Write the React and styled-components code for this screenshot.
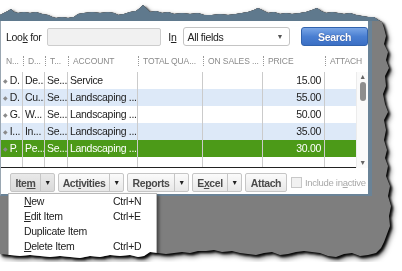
import styled, { createGlobalStyle } from "styled-components";

const FONT = `"Liberation Sans", Arial, sans-serif`;

const GlobalStyle = createGlobalStyle`
  html, body { margin: 0; padding: 0; background: #fff; }
  body { font-family: ${FONT}; letter-spacing: -0.3px; }
`;

// torn paper outline of the screenshot
const TOP = [
  [0, 15], [4, 13], [8, 11], [11, 9], [14, 12], [18, 13], [24, 12], [30, 13], [36, 12], [42, 14],
  [48, 15], [52, 17], [56, 18], [62, 17], [68, 18], [74, 17], [78, 14], [84, 13], [92, 12], [100, 13],
  [108, 12], [114, 13], [118, 15], [124, 14], [130, 12], [136, 11], [140, 8], [143, 5], [146, 8],
  [150, 12], [156, 11], [162, 13], [168, 12], [174, 14], [182, 13], [190, 14], [198, 13], [204, 15],
  [212, 15], [220, 14], [228, 15], [236, 14], [242, 13], [248, 12], [254, 10], [258, 8], [262, 10],
  [268, 13], [274, 12], [280, 14], [286, 13], [292, 14], [300, 13], [306, 12], [312, 10], [317, 8],
  [321, 11], [326, 13], [332, 12], [338, 13], [344, 14], [350, 13], [356, 15], [362, 16], [368, 17],
  [374, 17], [378, 20], [382, 22],
];
const RIGHT = [
  [384, 28], [386, 36], [384, 44], [388, 52], [386, 60], [389, 68], [385, 76], [386, 86], [383, 94],
  [385, 104], [388, 112], [384, 120], [386, 130], [384, 140], [387, 150], [385, 158], [388, 166],
  [386, 176], [390, 186], [388, 196], [391, 206], [389, 216], [390, 226], [387, 234], [384, 242],
  [381, 248],
];
const BOTTOM = [
  [376, 253], [368, 255], [360, 256], [352, 253], [344, 254], [336, 257], [328, 256], [320, 253],
  [312, 252], [304, 251], [296, 252], [288, 254], [280, 255], [272, 252], [264, 253], [256, 255],
  [248, 254], [240, 253], [232, 251], [222, 252], [214, 250], [206, 251], [198, 251], [190, 253],
  [182, 252], [174, 253], [166, 254], [158, 253], [150, 252], [144, 256], [138, 257], [130, 255],
  [120, 256], [110, 255], [100, 257], [90, 256], [80, 258], [70, 257], [60, 256], [50, 257],
  [40, 256], [30, 255], [20, 256], [10, 255], [0, 254],
];
const TORN = [...TOP, ...RIGHT, ...BOTTOM].map(([x, y]) => `${x}px ${y}px`).join(", ");

const HEAD = [
  { title: "N...", w: 22 },
  { title: "D...", w: 22 },
  { title: "T...", w: 23 },
  { title: "ACCOUNT", w: 70 },
  { title: "TOTAL QUA...", w: 65 },
  { title: "ON SALES ...", w: 60 },
  { title: "PRICE", w: 62 },
  { title: "ATTACH", w: 43 },
];
const BODY_COLS = "22px 22px 23px 70px 65px 60px 62px 31px";

const ROWS = [
  ["D.", "De...", "Se...", "Service", "15.00"],
  ["D.", "Cu...", "Se...", "Landscaping ...", "55.00"],
  ["G.", "W...", "Se...", "Landscaping ...", "50.00"],
  ["I...", "In...", "Se...", "Landscaping ...", "35.00"],
  ["P.", "Pe...", "Se...", "Landscaping ...", "30.00"],
];

const MENU = [
  { pre: "", u: "N", rest: "ew", key: "Ctrl+N" },
  { pre: "", u: "E", rest: "dit Item", key: "Ctrl+E" },
  { pre: "Duplicate Item", u: "", rest: "", key: "" },
  { pre: "", u: "D", rest: "elete Item", key: "Ctrl+D" },
];

export default function App() {
  return (
    <>
      <GlobalStyle />
      <Shadow>
        <Sheet $clip={TORN}>
          <TopBand />
          <Window>
            <SearchBar>
              <Label>
                Loo<u>k</u> for
              </Label>
              <TextBox />
              <Label $ml={7}>
                I<u>n</u>
              </Label>
              <Select>
                All fields<Caret>▼</Caret>
              </Select>
              <SearchButton>Search</SearchButton>
            </SearchBar>

            <HeaderRow>
              {HEAD.map((h, i) => (
                <HeadCell key={h.title} $w={h.w} $first={i === 0}>
                  {h.title}
                </HeadCell>
              ))}
            </HeaderRow>

            <TableBody>
              <Grid>
                {ROWS.map((r, i) => (
                  <Row key={i} $tone={i === 4 ? "sel" : i % 2 ? "alt" : "plain"}>
                    <Cell>
                      <Diamond>◆</Diamond>
                      {r[0]}
                    </Cell>
                    <Cell>{r[1]}</Cell>
                    <Cell>{r[2]}</Cell>
                    <Cell>{r[3]}</Cell>
                    <Cell />
                    <Cell />
                    <Cell $num>{r[4]}</Cell>
                    <Cell $last />
                  </Row>
                ))}
                <Row $tone="plain" $short>
                  {Array.from({ length: 8 }).map((_, i) => (
                    <Cell key={i} $last={i === 7} />
                  ))}
                </Row>
              </Grid>
              <Scrollbar>
                <Arrow>▲</Arrow>
                <Thumb />
                <Arrow $down>▼</Arrow>
              </Scrollbar>
            </TableBody>

            <Toolbar>
              <MenuAnchor>
                <Split $w={45} $active>
                  <SplitLabel>
                    Ite<u>m</u>
                  </SplitLabel>
                  <SplitArrow>▼</SplitArrow>
                </Split>
                <Menu>
                  {MENU.map((m) => (
                    <MenuItem key={m.pre + m.rest}>
                      <span>
                        {m.pre}
                        {m.u && <u>{m.u}</u>}
                        {m.rest}
                      </span>
                      <span>{m.key}</span>
                    </MenuItem>
                  ))}
                </Menu>
              </MenuAnchor>
              <Split $w={66}>
                <SplitLabel>
                  Act<u>i</u>vities
                </SplitLabel>
                <SplitArrow>▼</SplitArrow>
              </Split>
              <Split $w={62}>
                <SplitLabel>
                  Re<u>p</u>orts
                </SplitLabel>
                <SplitArrow>▼</SplitArrow>
              </Split>
              <Split $w={50}>
                <SplitLabel>
                  E<u>x</u>cel
                </SplitLabel>
                <SplitArrow>▼</SplitArrow>
              </Split>
              <Split $w={42}>
                <SplitLabel>Attach</SplitLabel>
              </Split>
              <Inactive>
                <Check />
                <span>
                  Include in<u>a</u>ctive
                </span>
              </Inactive>
            </Toolbar>
          </Window>
        </Sheet>
      </Shadow>
    </>
  );
}

const Shadow = styled.div`
  width: 400px;
  filter: drop-shadow(0 0 0.6px #111) drop-shadow(2px 2px 1px rgba(0, 0, 0, 0.95))
    drop-shadow(1px 2px 2px rgba(0, 0, 0, 0.5));
`;

const Sheet = styled.div`
  width: 395px;
  height: 262px;
  background: #7e7e7e;
  clip-path: polygon(${(p) => p.$clip});
  display: flex;
  flex-direction: column;
`;

const TopBand = styled.div`
  height: 21px;
  background: #5f798d;
  flex: none;
`;

const Window = styled.div`
  width: 367px;
  background: #fff;
  border-left: 1px solid #9aa7b2;
  border-right: 4px solid #6a8397;
  border-bottom: 2px solid #6a8397;
  display: flex;
  flex-direction: column;
`;

const SearchBar = styled.div`
  height: 29px;
  padding: 2px 0 0 5px;
  box-sizing: border-box;
  display: flex;
  align-items: center;
`;

const Label = styled.span`
  font-size: 10.5px;
  color: #222;
  white-space: nowrap;
  margin-left: ${(p) => p.$ml || 0}px;
  u {
    text-underline-offset: 1px;
  }
`;

const TextBox = styled.div`
  width: 115px;
  height: 18px;
  margin-left: 5px;
  box-sizing: border-box;
  background: #f1f1f1;
  border: 1px solid #cdcdcd;
  border-radius: 2px;
`;

const Select = styled.div`
  width: 107px;
  height: 19px;
  margin-left: 7px;
  box-sizing: border-box;
  border: 1px solid #c4c4c4;
  border-radius: 3px;
  padding-left: 3px;
  display: flex;
  align-items: center;
  justify-content: space-between;
  font-size: 10.5px;
  color: #222;
`;

const Caret = styled.span`
  font-size: 7px;
  color: #555;
  margin-right: 6px;
`;

const SearchButton = styled.div`
  width: 67px;
  height: 19px;
  margin-left: 11px;
  box-sizing: border-box;
  border: 1px solid #3263ad;
  border-radius: 3px;
  background: linear-gradient(#7aa6e6, #4a7fd2 50%, #3b6fc4);
  color: #fff;
  font-weight: bold;
  font-size: 10.5px;
  display: flex;
  align-items: center;
  justify-content: center;
  text-shadow: 0 0 1px rgba(0, 0, 60, 0.5);
`;

const HeaderRow = styled.div`
  display: flex;
  height: 22px;
`;

const HeadCell = styled.div`
  position: relative;
  width: ${(p) => p.$w}px;
  flex: none;
  box-sizing: border-box;
  padding-left: 5px;
  font-size: 8.5px;
  letter-spacing: -0.1px;
  line-height: 22px;
  color: #8a8a8a;
  white-space: nowrap;
  overflow: hidden;
  &::before {
    content: "";
    display: ${(p) => (p.$first ? "none" : "block")};
    position: absolute;
    left: 0;
    top: 6px;
    height: 10px;
    border-left: 1px dotted #999;
  }
`;

const TableBody = styled.div`
  display: flex;
`;

const Grid = styled.div`
  width: 355px;
  border-bottom: 1px solid #222;
`;

const Row = styled.div`
  display: grid;
  grid-template-columns: ${BODY_COLS};
  height: ${(p) => (p.$short ? 10 : 17)}px;
  background: ${(p) => (p.$tone === "sel" ? "#4c9a18" : p.$tone === "alt" ? "#dde9f8" : "#fff")};
  color: ${(p) => (p.$tone === "sel" ? "#fff" : "#222")};
`;

const Cell = styled.div`
  box-sizing: border-box;
  border-right: ${(p) => (p.$last ? "none" : "1px solid #cbcbcb")};
  padding: 0 ${(p) => (p.$num ? 3 : 2)}px;
  font-size: 10.5px;
  line-height: 17px;
  white-space: nowrap;
  overflow: hidden;
  text-align: ${(p) => (p.$num ? "right" : "left")};
`;

const Diamond = styled.span`
  font-size: 6px;
  color: #8a8a8a;
  margin-right: 2px;
  vertical-align: 1px;
`;

const Scrollbar = styled.div`
  width: 12px;
  display: flex;
  flex-direction: column;
  align-items: center;
  background: #fafafa;
  border-left: 1px solid #ececec;
  box-sizing: border-box;
`;

const Arrow = styled.div`
  font-size: 7px;
  color: #666;
  line-height: 9px;
  margin-top: ${(p) => (p.$down ? "auto" : "0")};
  margin-bottom: ${(p) => (p.$down ? "1px" : "0")};
`;

const Thumb = styled.div`
  width: 6px;
  height: 19px;
  margin-top: 1px;
  border-radius: 3px;
  background: #8e8e8e;
`;

const Toolbar = styled.div`
  height: 26px;
  padding: 5px 0 0 9px;
  box-sizing: border-box;
  display: flex;
  gap: 3px;
  align-items: flex-start;
`;

const MenuAnchor = styled.div`
  position: relative;
`;

const Split = styled.div`
  width: ${(p) => p.$w}px;
  height: 19px;
  box-sizing: border-box;
  display: flex;
  border: 1px solid #c6c6c6;
  border-radius: 2px;
  background: ${(p) =>
    p.$active ? "linear-gradient(#e9e9e9, #d9d9d9)" : "linear-gradient(#fbfbfb, #e8e8e8)"};
  font-size: 10.5px;
  font-weight: bold;
  letter-spacing: -0.4px;
  color: #4a4a4a;
`;

const SplitLabel = styled.div`
  flex: 1;
  display: flex;
  align-items: center;
  justify-content: center;
  white-space: nowrap;
`;

const SplitArrow = styled.div`
  width: 13px;
  border-left: 1px solid #c6c6c6;
  display: flex;
  align-items: center;
  justify-content: center;
  font-size: 7px;
  color: #222;
`;

const Inactive = styled.div`
  display: flex;
  align-items: center;
  height: 19px;
  margin-left: 1px;
  font-size: 9.5px;
  letter-spacing: -0.3px;
  color: #a9a9a9;
  gap: 3px;
  white-space: nowrap;
`;

const Check = styled.div`
  width: 9px;
  height: 9px;
  flex: none;
  border: 1px solid #c8c8c8;
  background: #f1f1f1;
`;

const Menu = styled.div`
  position: absolute;
  left: -2px;
  top: 20px;
  width: 149px;
  height: 72px;
  box-sizing: border-box;
  background: #fff;
  border: 1px solid #b9b9b9;
  box-shadow: 2px 2px 3px rgba(0, 0, 0, 0.45);
  z-index: 2;
`;

const MenuItem = styled.div`
  display: grid;
  grid-template-columns: 89px auto;
  padding-left: 15px;
  height: 15px;
  line-height: 15px;
  font-size: 10.5px;
  color: #222;
`;
